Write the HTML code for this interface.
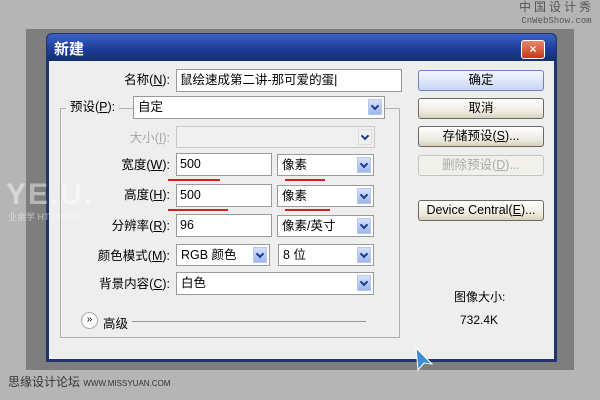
<!DOCTYPE html>
<html><head><meta charset="utf-8"><style>
body{margin:0;width:600px;height:400px;background:#b5b5b5;position:relative;overflow:hidden;font-family:"Liberation Sans","Noto Sans CJK SC",sans-serif;font-size:12px;color:#000}
.a{position:absolute}
.frame{left:26px;top:29px;width:548px;height:341px;background:#7e7e7e}
.dlg{left:46px;top:33px;width:511px;height:329px;background:#1f3470;border-radius:6px 6px 0 0}
.title{left:47px;top:34px;width:509px;height:27px;background:linear-gradient(#3a63c8,#1c3a94 60%,#14306e);border-radius:6px 6px 0 0}
.body{left:49px;top:61px;width:505px;height:298px;background:#eeeeee}
.lbl{text-align:right;width:120px;left:50px;font-size:12.5px;line-height:14px}
.in{background:#fff;border:1px solid #9a9a9a;height:21px;box-sizing:border-box;padding:0 3px;font-size:12.5px;line-height:19px}
.sel{background:#fff;border:1px solid #9a9a9a;height:22px;box-sizing:border-box;padding:0 4px;font-size:12.5px;line-height:20px}
.arr{position:absolute;right:2px;top:2px;width:14px;height:16px;background:linear-gradient(#d6e2fb,#9cb5ea);border:1px solid #b7c8ef;box-sizing:border-box}
.arr:after{content:"";position:absolute;left:3px;top:3px;width:4px;height:4px;border-right:2px solid #1b3a90;border-bottom:2px solid #1b3a90;transform:rotate(45deg)}
.btn{left:418px;width:126px;height:21px;box-sizing:border-box;border:1px solid #6a6a60;border-radius:3px;background:linear-gradient(#fff,#ece9dc 70%,#d6d0bd);text-align:center;line-height:19px;font-size:12.5px}
.red{height:2px;background:#d42020}
.dis{color:#aaa}
</style></head><body>
<div class="a" style="right:6px;top:2px;text-align:center;font-size:12px;color:#555;line-height:12px;letter-spacing:3px;font-family:'Liberation Mono','Noto Sans CJK SC',monospace">中国设计秀<br><span style="font-size:9px;letter-spacing:0">CnWebShow.com</span></div>
<div class="a frame"></div>
<div class="a dlg"></div>
<div class="a title"></div>
<div class="a" style="left:54px;top:38px;color:#fff;font-size:15px;font-weight:bold">新建</div>
<div class="a" style="left:521px;top:40px;width:22px;height:17px;background:linear-gradient(#e88868,#c2391c);border:1px solid #fff;border-radius:3px;color:#fff;text-align:center;line-height:16px;font-weight:bold;font-size:12px">×</div>
<div class="a body"></div>
<div class="a lbl" style="top:73px">名称(<u>N</u>):</div>
<div class="a in" style="left:176px;top:69px;width:226px;height:23px;line-height:21px">鼠绘速成第二讲-那可爱的蛋|</div>
<div class="a" style="left:60px;top:108px;width:340px;height:230px;border:1px solid #b0b0b0;box-sizing:border-box"></div>
<div class="a" style="left:66px;top:100px;background:#eee;padding:0 4px;font-size:12.5px;line-height:14px">预设(<u>P</u>):</div>
<div class="a sel" style="left:133px;top:96px;width:252px;height:23px">自定<span class="arr"></span></div>
<div class="a lbl dis" style="top:131px">大小(<u>I</u>):</div>
<div class="a sel" style="left:176px;top:126px;width:199px;background:#f0f0f0;border-color:#c8c8c8"><span class="arr" style="background:#f0f0f0;border-color:#ddd"></span></div>
<div class="a lbl" style="top:158px">宽度(<u>W</u>):</div>
<div class="a in" style="left:176px;top:153px;width:96px;height:23px;line-height:21px">500</div>
<div class="a sel" style="left:277px;top:154px;width:97px">像素<span class="arr"></span></div>
<div class="a red" style="left:168px;top:179px;width:52px"></div>
<div class="a red" style="left:285px;top:179px;width:40px"></div>
<div class="a lbl" style="top:188px">高度(<u>H</u>):</div>
<div class="a in" style="left:176px;top:184px;width:96px;height:23px;line-height:21px">500</div>
<div class="a sel" style="left:277px;top:185px;width:97px">像素<span class="arr"></span></div>
<div class="a red" style="left:168px;top:209px;width:60px"></div>
<div class="a red" style="left:285px;top:209px;width:45px"></div>
<div class="a lbl" style="top:219px">分辨率(<u>R</u>):</div>
<div class="a in" style="left:176px;top:214px;width:96px;height:23px;line-height:21px">96</div>
<div class="a sel" style="left:277px;top:215px;width:97px">像素/英寸<span class="arr"></span></div>
<div class="a lbl" style="top:249px">颜色模式(<u>M</u>):</div>
<div class="a sel" style="left:176px;top:244px;width:94px">RGB 颜色<span class="arr"></span></div>
<div class="a sel" style="left:278px;top:244px;width:96px">8 位<span class="arr"></span></div>
<div class="a lbl" style="top:277px">背景内容(<u>C</u>):</div>
<div class="a sel" style="left:176px;top:272px;width:198px;height:23px">白色<span class="arr"></span></div>
<div class="a" style="left:81px;top:312px;width:15px;height:15px;border-radius:50%;border:1px solid #aaa;background:#fff;text-align:center;line-height:14px;font-size:10px">»</div>
<div class="a" style="left:103px;top:313px;font-size:12.5px">高级</div>
<div class="a" style="left:132px;top:321px;width:234px;height:1px;background:#999"></div>
<div class="a btn" style="top:70px;background:linear-gradient(#f4f7ff,#c9d6f4);border-color:#6b83c4">确定</div>
<div class="a btn" style="top:98px">取消</div>
<div class="a btn" style="top:126px">存储预设(<u>S</u>)...</div>
<div class="a btn dis" style="top:155px;border-color:#c6c6c0;background:#f1f0eb">删除预设(<u>D</u>)...</div>
<div class="a btn" style="top:200px">Device Central(<u>E</u>)...</div>
<div class="a" style="left:454px;top:288px;font-size:12px">图像大小:</div>
<div class="a" style="left:460px;top:313px;font-size:12px">732.4K</div>
<svg class="a" style="left:414px;top:346px" width="22" height="26"><polygon points="2,2 18,18 10,17 4,24" fill="#3a8fd0" stroke="#fff" stroke-width="1"/></svg>
<div class="a" style="left:6px;top:178px;font-size:30px;font-weight:bold;color:rgba(255,255,255,.45);letter-spacing:2px">YE.U.</div>
<div class="a" style="left:8px;top:210px;font-size:9px;color:rgba(255,255,255,.5)">业余学 HTTP://W</div>
<div class="a" style="left:8px;top:373px;font-size:12px;color:#333">思缘设计论坛 <span style="font-size:8px">WWW.MISSYUAN.COM</span></div>
</body></html>
